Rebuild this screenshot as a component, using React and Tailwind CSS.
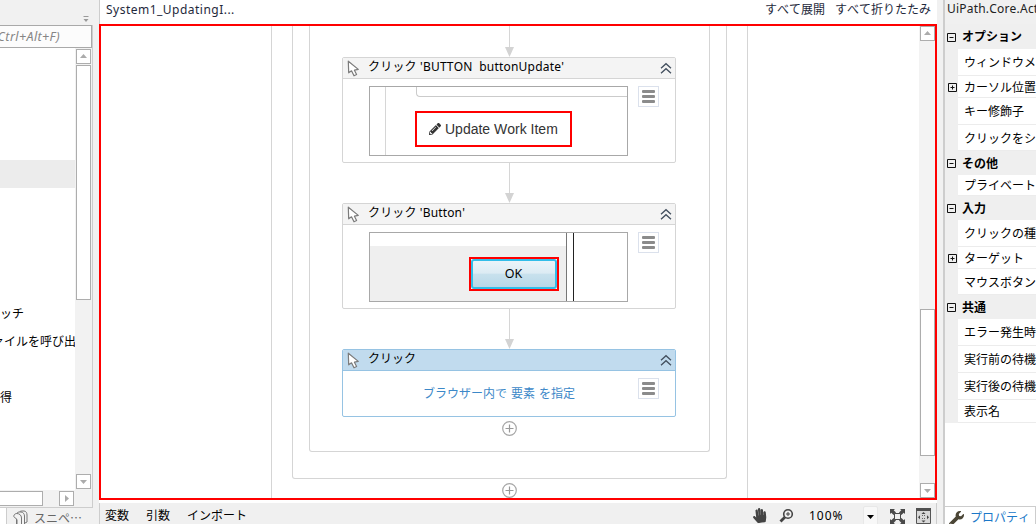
import React from "react";
import { FaHandPaper, FaWrench, FaPencilAlt } from "react-icons/fa";

function Arrow({ dir }) {
  const shape = {
    up: "M2 7h7L5.5 3z",
    down: "M2 4h7L5.5 8z",
    right: "M4 2v7l4-3.5z",
  }[dir];
  return (
    <div className="flex h-[15px] w-[15px] shrink-0 items-center justify-center border border-[#adadad] bg-white">
      <svg width="11" height="11" viewBox="0 0 11 11"><path d={shape} fill="#ababab" /></svg>
    </div>
  );
}

function Connector({ tall }) {
  return (
    <div className={`ml-[195px] flex w-[9px] shrink-0 flex-col items-center ${tall}`}>
      <div className="w-px flex-1 bg-[#d6d6d6]" />
      <svg className="block shrink-0" width="9" height="10" viewBox="0 0 9 10"><path d="M0 0h9L4.5 10z" fill="#d3d3d3" /></svg>
    </div>
  );
}

function PlusCircle() {
  return (
    <svg className="block shrink-0" width="15" height="15" viewBox="0 0 15 15" fill="none">
      <circle cx="7.5" cy="7.5" r="6.8" stroke="#a6a6a6" strokeWidth="1.2" />
      <path d="M7.5 3.5v8M3.5 7.5h8" stroke="#999" strokeWidth="1.2" />
    </svg>
  );
}

function Cursor() {
  return (
    <svg className="mt-[2px] ml-[4px] block shrink-0" width="13" height="18" viewBox="0 0 13 18">
      <path d="M1.3 1.2 L1.7 12.8 L4.5 10.8 L7 15.8 L9.6 14.5 L7.4 10.2 L11.3 9.4 Z" fill="#fff" stroke="#7b7b7b" strokeWidth="1.2" strokeLinejoin="round" />
    </svg>
  );
}

function Card({ title, active, children }) {
  const line = active ? "border-[#96c3e3]" : "border-[#d5d5d5]";
  return (
    <div className={`ml-[32px] flex w-[334px] shrink-0 flex-col overflow-hidden rounded-[2px] border bg-white ${line} ${active ? "h-[68px]" : "h-[106px]"}`}>
      <div className={`flex h-[21px] shrink-0 border-b ${line} ${active ? "bg-[#c1dbee]" : "bg-[#f4f4f4]"}`}>
        <Cursor />
        <div className="ml-[8px] flex-1 whitespace-pre leading-[17px] text-black">{title}</div>
        <svg className="mt-[4px] mr-[3px] block" width="12" height="13" viewBox="0 0 12 13" fill="none" stroke="#44505f" strokeWidth="1.3">
          <path d="M1 6.3l5-4.6 5 4.6M1 11.3l5-4.6 5 4.6" />
        </svg>
      </div>
      <div className="flex flex-1">
        {children}
        <div className="mt-[7px] ml-[10px] flex h-[21px] w-[21px] shrink-0 flex-col items-center justify-center gap-[2px] border border-[#dbe1ec] bg-white">
          <div className="h-[3px] w-[13px] rounded-[1px] bg-[#8b8b8b]" />
          <div className="h-[3px] w-[13px] rounded-[1px] bg-[#8b8b8b]" />
          <div className="h-[3px] w-[13px] rounded-[1px] bg-[#8b8b8b]" />
        </div>
      </div>
    </div>
  );
}

function LeftPanel() {
  return (
    <div className="flex w-[93px] shrink-0 flex-col">
      <div className="flex h-[25px] shrink-0 justify-end pr-[4px] pt-[15px]">
        <svg width="6" height="8" viewBox="0 0 6 8"><path d="M.5 1h5v1h-5zM.5 4h5L3 7z" fill="#999" /></svg>
      </div>
      <div className="flex h-[483px] flex-col border-r border-b border-[#cdcdcd] bg-white">
        <div className="flex h-[23px] shrink-0 items-center justify-end overflow-hidden border border-l-0 border-[#a9a9a9] bg-[#fcfcfc] pt-px pr-[31px] text-[12.5px] italic text-[#858585]">
          <span className="whitespace-nowrap tracking-[0.4px]">(Ctrl+Alt+F)</span>
        </div>
        <div className="flex h-[442px] shrink-0">
          <div className="flex w-[75px] shrink-0 flex-col overflow-hidden whitespace-nowrap text-black">
            <div className="mt-[112px] h-[28px] shrink-0 bg-[#ececec]" />
            <div className="mt-[112px] h-[28px] shrink-0 leading-[28px]">ッチ</div>
            <div className="-ml-[8px] h-[28px] shrink-0 leading-[28px]">ァイルを呼び出</div>
            <div className="mt-[28px] h-[28px] shrink-0 leading-[28px]">得</div>
          </div>
          <div className="flex w-[17px] flex-col bg-[#f2f2f2] py-px pl-px">
            <Arrow dir="up" />
            <div className="mt-px h-[235px] w-[15px] border border-[#adadad] bg-white" />
            <div className="flex-1" />
            <Arrow dir="down" />
          </div>
        </div>
        <div className="flex flex-1 bg-[#f2f2f2] pt-px">
          <div className="h-[15px] w-[43px] border border-l-0 border-[#adadad] bg-white" />
          <div className="w-[16px]" />
          <Arrow dir="right" />
        </div>
      </div>
      <div className="flex h-[16px]">
        <div className="w-[6px] bg-white" />
        <div className="flex flex-1 overflow-hidden border-l border-[#cdcdcd] text-[#666]">
          <svg className="mt-[2px] ml-[6px] block shrink-0" width="15" height="16" viewBox="0 0 15 16" fill="#f3f3f3" stroke="#777" strokeWidth="1">
            <path d="M6 15V4c0-2 1-3 3-3h2c2 0 3 2 3 4v7l-2 1" />
            <path d="M3.5 15V5c0-2 1-3 3-3h1.500c2 0 3.500 2 3.500 4v8l-2 1" />
            <path d="M.7 6.500c.3-2 1.500-3 3-3 2.500 0 4.800 1.500 4.800 4.500v8H4V9.500z" />
          </svg>
          <span lang="ja" className="ml-[6px] whitespace-nowrap font-['Noto_Sans_CJK_JP',sans-serif] leading-[19px]">スニペ…</span>
        </div>
      </div>
    </div>
  );
}

function Canvas() {
  return (
    <div className="flex h-[476px] shrink-0 overflow-hidden border-2 border-[#f00] bg-white">
      <div className="flex w-[818px] shrink-0">
        <div className="ml-[170px] flex h-[472px] w-[477px] flex-col overflow-hidden border-x border-[#d5d5d5]">
          <div className="ml-[20px] h-[453px] w-[435px] shrink-0 rounded-b-[3px] border border-t-0 border-[#d5d5d5]">
            <div className="ml-[16px] flex h-[426px] w-[401px] flex-col rounded-b-[3px] border border-t-0 border-[#d5d5d5]">
              <Connector tall="h-[31px]" />
              <Card title={<span className="tracking-[0.2px]">クリック 'BUTTON&nbsp; buttonUpdate'</span>}>
                <div className="mt-[7px] ml-[26px] flex h-[70px] w-[259px] border border-[#a8a8a8]">
                  <div className="w-[16px] border-r border-[#d6d6d6]" />
                  <div className="flex flex-1 flex-col">
                    <div className="ml-[30px] h-[10px] rounded-bl-[4px] border-b border-l border-[#cbcbcb]" />
                    <div className="mt-[14px] ml-[29px] flex h-[36px] w-[157px] items-center border-2 border-[#f00] pl-[12px] font-['Liberation_Sans'] text-[14px] text-[#333]">
                      <FaPencilAlt size={12} />
                      <span className="ml-[4px] whitespace-nowrap">Update Work Item</span>
                    </div>
                  </div>
                </div>
              </Card>
              <Connector tall="h-[40px]" />
              <Card title={<span className="tracking-[0.15px]">クリック 'Button'</span>}>
                <div className="mt-[7px] ml-[26px] flex h-[70px] w-[259px] border border-[#a8a8a8]">
                  <div className="flex w-[197px] flex-col border-r border-[#777]">
                    <div className="h-[13px]" />
                    <div className="flex-1 bg-[#efefef] pt-[11px] pl-[99px]">
                      <div className="h-[34px] w-[90px] border-2 border-[#f00] bg-white">
                        <div className="flex h-[30px] items-center justify-center rounded-[3px] border-2 border-[#32bde9] bg-[linear-gradient(#eaf4f9_0%,#dcebf3_47%,#c8e1ed_50%,#b8d8e8_100%)] pr-px text-[12.5px] text-black">OK</div>
                      </div>
                    </div>
                  </div>
                  <div className="w-[7px] border-r border-[#222]" />
                </div>
              </Card>
              <Connector tall="h-[40px]" />
              <Card title="クリック" active>
                <div className="ml-[80px] w-[205px] whitespace-nowrap pt-[14px] leading-[18px] text-[#3c88c8] [word-spacing:0.9px]">ブラウザー内で 要素 を指定</div>
              </Card>
              <div className="mt-[4px] ml-[192px]"><PlusCircle /></div>
            </div>
          </div>
          <div className="mt-[4px] ml-[230px]"><PlusCircle /></div>
        </div>
      </div>
      <div className="flex w-[16px] flex-col bg-[#f3f3f3] pl-px">
        <Arrow dir="up" />
        <div className="h-[268px]" />
        <div className="h-[147px] w-[15px] shrink-0 border border-[#adadad] bg-white" />
        <div className="flex-1" />
        <Arrow dir="down" />
      </div>
    </div>
  );
}

function CenterPanel() {
  return (
    <div className="flex w-[838px] shrink-0 flex-col bg-white">
      <div className="flex h-[24px] shrink-0 justify-between border-l border-[#cdcdcd] pr-[6px] pl-[6px] leading-[19px] whitespace-nowrap">
        <span className="tracking-[0.48px] text-[#1e293b]">System1_UpdatingI...</span>
        <div className="flex gap-[10px] text-[#1e293b]"><span>すべて展開</span><span>すべて折りたたみ</span></div>
      </div>
      <Canvas />
      <div className="h-[3px] shrink-0" />
      <div className="flex flex-1 overflow-hidden border-x border-[#cdcdcd] bg-[#f0f0f0] pl-[5px] text-black">
        <div className="flex w-[647px] gap-[17px] leading-[25px] whitespace-nowrap"><span>変数</span><span>引数</span><span>インポート</span></div>
        <FaHandPaper className="mt-[5px] shrink-0 -rotate-6 text-[#444]" size={15} />
        <svg className="mt-[5px] ml-[12px] block shrink-0" width="15" height="15" viewBox="0 0 15 15" fill="none" stroke="#444">
          <circle cx="9" cy="6" r="4.300" strokeWidth="1.600" />
          <path d="M5.800 9.200L1.500 13.500" strokeWidth="2.800" />
          <path d="M9 4v4M7 6h4" strokeWidth="1" />
        </svg>
        <span className="ml-[15px] w-[54px] shrink-0 leading-[25px] tracking-[1px]">100%</span>
        <div className="mt-[3px] flex h-[20px] w-[15px] shrink-0 justify-center rounded-[2px] border border-[#e8e8e8] bg-[#f8f8f8] pt-[8px]">
          <svg width="7" height="4" viewBox="0 0 7 4"><path d="M0 0h7L3.500 4z" fill="#000" /></svg>
        </div>
        <svg className="mt-[6px] ml-[12px] block shrink-0" width="15" height="15" viewBox="0 0 15 15" fill="#494949">
          <path d="M0 0h5L3.700 1.300 6 3.600 3.600 6 1.300 3.700 0 5zM15 0v5l-1.300-1.300L11.400 6 9 3.600l2.300-2.300L10 0zM0 15v-5l1.300 1.300L3.600 9 6 11.400l-2.300 2.300L5 15zM15 15h-5l1.300-1.300L9 11.400 11.400 9l2.300 2.300L15 10z" />
          <path d="M4.500 4.500h6v6h-6z" fill="#eee" stroke="#494949" />
        </svg>
        <svg className="mt-[5px] ml-[11px] block shrink-0" width="15" height="16" viewBox="0 0 15 16">
          <path d="M.5.500h14v15H.500z" fill="#d8d8d8" stroke="#555" />
          <path d="M0 0h15v3H0z" fill="#505050" />
          <path d="M7.500 4l2 2h-4zM7.500 14.500l2-2h-4zM2 9.200l2-2v4zM13 9.200l-2-2v4z" fill="#444" />
          <path d="M6 7.500h1M8 7.500h1M6 10.500h1M8 10.500h1" stroke="#666" />
        </svg>
      </div>
    </div>
  );
}

function Toggle({ plus }) {
  return (
    <svg className="block shrink-0" width="9" height="9" viewBox="0 0 9 9" fill="none" stroke="#111">
      <path d="M.5.500h8v8h-8zM2.500 4.500h4" />
      {plus && <path d="M4.500 2.500v4" />}
    </svg>
  );
}

function Section({ title, height, offset = "mt-[8px]" }) {
  return (
    <div className={`flex shrink-0 bg-[#efefef] pl-[2px] font-bold text-black ${height}`}>
      <div className={offset}><Toggle /></div>
      <span className="ml-[6px] leading-[25px] whitespace-nowrap">{title}</span>
    </div>
  );
}

function Row({ label, height, plus }) {
  return (
    <div className={`flex shrink-0 ${height}`}>
      <div className="w-[13px] shrink-0 bg-[#efefef] pt-[7px] pl-[3px]">{plus && <Toggle plus />}</div>
      <div className="flex flex-1 items-center overflow-hidden border-b border-[#ececec] bg-white pt-[2px] pl-[6px] whitespace-nowrap text-black">{label}</div>
    </div>
  );
}

function RightPanel() {
  return (
    <div className="flex w-[93px] shrink-0 flex-col overflow-hidden border-l-2 border-[#cdcdcd]">
      <div className="h-[24px] shrink-0 bg-[#f0f0f0] pl-[2px] leading-[17px] whitespace-nowrap tracking-[0.2px] text-[#222]">UiPath.Core.Activities.Click</div>
      <div className="flex flex-1 flex-col bg-white">
        <Section title="オプション" height="h-[25px]" offset="mt-[9px]" />
        <Row label="ウィンドウメッセージ" height="h-[27px]" />
        <Row label="カーソル位置" height="h-[22px]" plus />
        <Row label="キー修飾子" height="h-[27px]" />
        <Row label="クリックをシミュレート" height="h-[26px]" />
        <Section title="その他" height="h-[24px]" />
        <Row label="プライベート" height="h-[21px]" />
        <Section title="入力" height="h-[24px]" />
        <Row label="クリックの種類" height="h-[27px]" />
        <Row label="ターゲット" height="h-[22px]" plus />
        <Row label="マウスボタン" height="h-[26px]" />
        <Section title="共通" height="h-[24px]" />
        <Row label="エラー発生時に実行を継続" height="h-[27px]" />
        <Row label="実行前の待機時間" height="h-[27px]" />
        <Row label="実行後の待機時間" height="h-[27px]" />
        <Row label="表示名" height="h-[23px]" />
      </div>
      <div className="flex h-[18px] shrink-0">
        <div className="flex w-[91px] overflow-hidden border-t border-r border-[#cdcdcd] bg-white text-[#1b78c8]">
          <FaWrench className="mt-[4px] ml-[4px] shrink-0 text-[#4b4636]" size={15} />
          <span className="ml-[6px] leading-[22px] whitespace-nowrap">プロパティ</span>
        </div>
      </div>
    </div>
  );
}

export default function App() {
  return (
    <div lang="ja" className="flex h-[524px] w-[1036px] overflow-hidden bg-[#f1f1f1] font-['Noto_Sans','Noto_Sans_CJK_JP',sans-serif] text-[12px] [font-kerning:none]">
      <LeftPanel />
      <div className="w-[6px] shrink-0" />
      <CenterPanel />
      <div className="w-[6px] shrink-0" />
      <RightPanel />
    </div>
  );
}
